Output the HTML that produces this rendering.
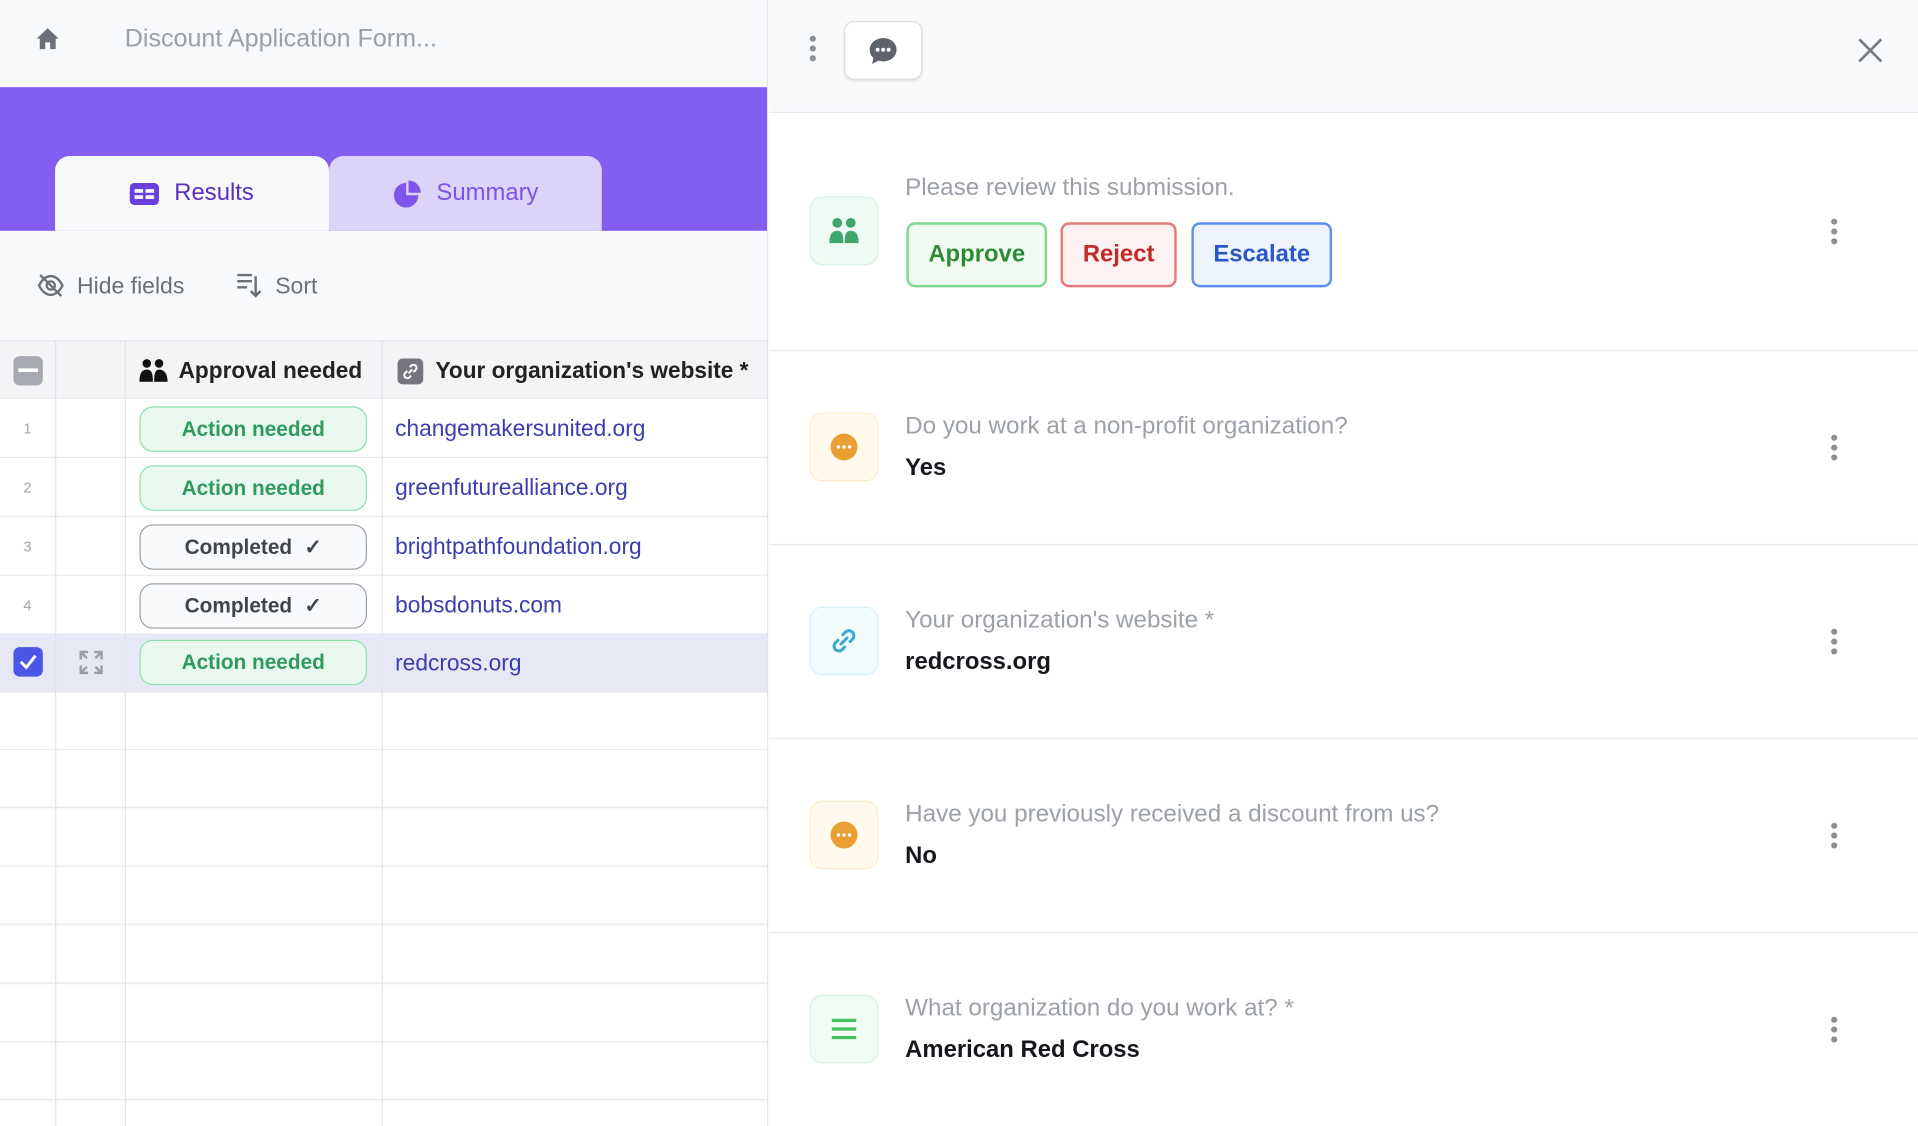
<!DOCTYPE html>
<html><head><meta charset="utf-8">
<style>
*{box-sizing:border-box;margin:0;padding:0}
html,body{width:1918px;height:1126px;overflow:hidden;background:#fff;font-family:"Liberation Sans",Arial,sans-serif}
#w{position:absolute;left:0;top:0;width:1568px;height:917px;transform:scale(1.2232,1.2279);transform-origin:0 0}
.a{position:absolute}
.left{left:0;top:0;width:628px;height:917px;background:#f8f9fb;border-right:1px solid #e4e5e9;overflow:hidden}
.title{left:102px;top:20px;font-size:20.5px;color:#9b9fa7}
.band{left:0;top:71px;width:628px;height:117px;background:#845ef0}
.tab{top:127px;height:61px;border-radius:12px 12px 0 0;font-size:19.5px;display:flex;align-items:center;justify-content:center;gap:12px}
.row{position:absolute;left:0;width:628px;height:48px;border-bottom:1px solid #e8e9ec;background:#fff}
.e{height:47px}
.vl{position:absolute;top:277px;bottom:0;width:1px;background:#e4e5e8}
.num{position:absolute;left:0;width:45px;text-align:center;font-size:12px;color:#a2a5ad;top:17px}
.pill{position:absolute;left:114px;top:6px;width:186px;height:37px;border-radius:11px;font-size:17px;font-weight:bold;display:flex;align-items:center;justify-content:center;gap:10px}
.act{background:#e9f9ef;border:1.5px solid #8ee0ad;color:#309a5d}
.cmp{background:#f9fafb;border:1.5px solid #9ea2aa;color:#42444c}
.lnk{position:absolute;left:323px;top:13px;font-size:18.6px;color:#3a3eae}
.right{left:629px;top:0;width:939px;height:917px;background:#fff}
.sec{position:absolute;left:0;width:939px;border-bottom:1.5px solid #ebebef}
.ib{position:absolute;left:33px;width:56px;height:56px;border-radius:10px;display:flex;align-items:center;justify-content:center}
.lbl{position:absolute;left:111px;font-size:19.8px;color:#9ca0a8}
.val{position:absolute;left:111px;font-size:19.5px;font-weight:bold;color:#15171c}
.keb{position:absolute;left:868px;width:6px}
.keb i{display:block;width:5px;height:5px;border-radius:50%;background:#8b8f97;margin-bottom:3px}
.btn{position:absolute;top:181px;height:53px;border-radius:7px;font-size:19.5px;font-weight:bold;display:flex;align-items:center;justify-content:center}
</style></head><body><div id="w">
<div class="a left">
  <svg class="a" style="left:29px;top:22px" width="20" height="19" viewBox="0 0 20 19"><path d="M10 1 L19 9.5 H16.5 V18 H12 V12.5 H8 V18 H3.5 V9.5 H1 Z" fill="#6b6f78"/></svg>
  <div class="a title">Discount Application Form...</div>
  <div class="a band"></div>
  <div class="a tab" style="left:45px;width:224px;background:#f8f9fb;color:#5a2fc2">
    <svg width="24" height="18" viewBox="0 0 24 18"><rect x="0" y="0" width="24" height="18" rx="4" fill="#6a3fe0"/><rect x="4" y="5" width="7" height="3" fill="#f8f9fb"/><rect x="13" y="5" width="7" height="3" fill="#f8f9fb"/><rect x="4" y="10" width="7" height="3" fill="#f8f9fb"/><rect x="13" y="10" width="7" height="3" fill="#f8f9fb"/></svg>Results</div>
  <div class="a tab" style="left:269px;width:223px;background:#dcd4f8;color:#7d52e6">
    <svg width="24" height="24" viewBox="0 0 24 24"><path d="M11 3 A10 10 0 1 0 21 13 H11 Z" fill="#8055ea"/><path d="M13 1 A10 10 0 0 1 23 11 H13 Z" fill="#8055ea"/></svg>Summary</div>
  <svg class="a" style="left:30px;top:221px" width="23" height="23" viewBox="0 0 24 24" fill="none" stroke="#6b6f78" stroke-width="2"><path d="M2 12 C5 6 9 4 12 4 C15 4 19 6 22 12 C19 18 15 20 12 20 C9 20 5 18 2 12Z"/><circle cx="12" cy="12" r="3.5"/><path d="M3 3 L21 21"/></svg>
  <div class="a" style="left:63px;top:222px;font-size:18.8px;color:#6b6f78">Hide fields</div>
  <svg class="a" style="left:193px;top:221px" width="22" height="22" viewBox="0 0 22 22" fill="none" stroke="#6b6f78" stroke-width="2"><path d="M1 3H13M1 8H13M1 13H9M16 4V20M12 16L16 20L20 16"/></svg>
  <div class="a" style="left:225px;top:222px;font-size:18.8px;color:#6b6f78">Sort</div>

  <div class="row" style="top:277px;height:48px;background:#f4f4f6;border-top:1.5px solid #e6e7ea">
    <div class="a" style="left:11px;top:12px;width:24px;height:24px;border-radius:5px;background:#a7a9b1"><div class="a" style="left:4px;top:10px;width:16px;height:3px;background:#fff"></div></div>
    <svg class="a" style="left:114px;top:14px" width="23" height="19" viewBox="0 0 23 19" fill="#111"><circle cx="6" cy="4" r="3.5"/><circle cx="16" cy="4" r="3.5"/><path d="M0 19 C0 12 2 9 6 9 C10 9 11 12 11 19Z"/><path d="M12 19 C12 12 13 9 16 9 C20 9 23 12 23 19Z"/></svg>
    <div class="a" style="left:146px;top:13px;font-size:18.5px;font-weight:bold;color:#222">Approval needed</div>
    <div class="a" style="left:325px;top:14px;width:21px;height:21px;border-radius:4px;background:#75767d"></div>
    <svg class="a" style="left:325px;top:14px" width="21" height="21" viewBox="0 0 21 21" fill="none" stroke="#fff" stroke-width="1.6"><path d="M9 12 L12 9"/><path d="M8 10 L6 12 A2.5 2.5 0 0 0 9.5 15.5 L11 14"/><path d="M10 7 L11.5 5.5 A2.5 2.5 0 0 1 15 9 L13 11"/></svg>
    <div class="a" style="left:356px;top:13px;font-size:18.5px;font-weight:bold;color:#222">Your organization's website *</div>
  </div>
  <div class="row" style="top:325px"><div class="num">1</div><div class="pill act">Action needed</div><div class="lnk">changemakersunited.org</div></div>
  <div class="row" style="top:373px"><div class="num">2</div><div class="pill act">Action needed</div><div class="lnk">greenfuturealliance.org</div></div>
  <div class="row" style="top:421px"><div class="num">3</div><div class="pill cmp">Completed <span>✓</span></div><div class="lnk">brightpathfoundation.org</div></div>
  <div class="row" style="top:469px"><div class="num">4</div><div class="pill cmp">Completed <span>✓</span></div><div class="lnk">bobsdonuts.com</div></div>
  <div class="row" style="top:516px;background:#e6e9f5">
    <div class="a" style="left:11px;top:11px;width:24px;height:24px;border-radius:5px;background:#4b55e8"></div>
    <svg class="a" style="left:11px;top:11px" width="24" height="24" viewBox="0 0 24 24" fill="none" stroke="#fff" stroke-width="2.4"><path d="M6 12 L10.5 16.5 L18 7"/></svg>
    <svg class="a" style="left:64px;top:13px" width="21" height="21" viewBox="0 0 21 21" fill="none" stroke="#9a9da5" stroke-width="2"><path d="M2 8V2H8M2 2L7 7M19 8V2H13M19 2L14 7M2 13V19H8M2 19L7 14M19 13V19H13M19 19L14 14"/></svg>
    <div class="pill act" style="top:5px">Action needed</div><div class="lnk">redcross.org</div></div>
  <div class="row e" style="top:564px"></div><div class="row e" style="top:611px"></div><div class="row e" style="top:659px"></div><div class="row e" style="top:706px"></div><div class="row e" style="top:754px"></div><div class="row e" style="top:802px"></div><div class="row e" style="top:849px"></div><div class="row e" style="top:897px"></div>
  <div class="vl" style="left:45px"></div><div class="vl" style="left:102px"></div><div class="vl" style="left:312px"></div>
</div>

<div class="a right">
  <div class="sec" style="top:0;height:92px;background:#f8f9fb">
    <div class="keb" style="left:33px;top:29px"><i></i><i></i><i></i></div>
    <div class="a" style="left:61px;top:17px;width:64px;height:48px;background:#fff;border:1.5px solid #dcdde1;border-radius:8px;box-shadow:0 1px 2px rgba(0,0,0,.08)"></div>
    <svg class="a" style="left:81px;top:30px" width="24" height="23" viewBox="0 0 24 23"><path d="M12 1 C18 1 23 5 23 10.5 C23 16 18 20 12 20 C10 20 9 19.5 8 19.5 L3 22 L4 17 C2 15.5 1 13 1 10.5 C1 5 6 1 12 1Z" fill="#5e626b"/><circle cx="7.5" cy="10.5" r="1.6" fill="#fff"/><circle cx="12" cy="10.5" r="1.6" fill="#fff"/><circle cx="16.5" cy="10.5" r="1.6" fill="#fff"/></svg>
    <svg class="a" style="left:889px;top:30px" width="22" height="22" viewBox="0 0 22 22" stroke="#777b83" stroke-width="2.2"><path d="M2 2L20 20M20 2L2 20"/></svg>
  </div>
  <div class="sec" style="top:92px;height:194px">
    <div class="ib" style="top:68px;background:#eefaf3;border:1.5px solid #d7f2e2"><svg width="24" height="22" viewBox="0 0 24 22" fill="#3fa66e"><circle cx="6.5" cy="4.5" r="4"/><circle cx="17.5" cy="4.5" r="4"/><path d="M0 21 C0 13 3 11 6.5 11 C10 11 11.5 13 11.5 21Z"/><path d="M12.5 21 C12.5 13 14 11 17.5 11 C21 11 24 13 24 21Z"/></svg></div>
    <div class="lbl" style="top:50px">Please review this submission.</div>
    <div class="keb" style="top:86px"><i></i><i></i><i></i></div>
  </div>
  <div class="btn" style="left:112px;width:115px;background:#effbf1;border:2px solid #7fd88f;color:#2e8a35">Approve</div>
  <div class="btn" style="left:238px;width:95px;background:#fdf1f1;border:2px solid #e07c7c;color:#c2292b">Reject</div>
  <div class="btn" style="left:345px;width:115px;background:#eef4fe;border:2px solid #5f8ff0;color:#2b56c8">Escalate</div>
  <div class="sec" style="top:286px;height:158px">
    <div class="ib" style="top:50px;background:#fffaeb;border:1.5px solid #fbeec8"><svg width="24" height="24" viewBox="0 0 24 24"><circle cx="12" cy="12" r="11" fill="#ea9f35"/><circle cx="7.5" cy="12" r="1.4" fill="#fff"/><circle cx="12" cy="12" r="1.4" fill="#fff"/><circle cx="16.5" cy="12" r="1.4" fill="#fff"/></svg></div>
    <div class="lbl" style="top:50px">Do you work at a non-profit organization?</div>
    <div class="val" style="top:84px">Yes</div>
    <div class="keb" style="top:68px"><i></i><i></i><i></i></div>
  </div>
  <div class="sec" style="top:444px;height:158px">
    <div class="ib" style="top:50px;background:#effbfd;border:1.5px solid #d5f2f8"><svg width="24" height="24" viewBox="0 0 24 24" fill="none" stroke="#3aa8cf" stroke-width="2.4" stroke-linecap="round"><path d="M9.5 14.5 L14.5 9.5"/><path d="M11 7 L13 5 A3.5 3.5 0 0 1 19 10.5 L17 12.5"/><path d="M7 11.5 L5 13.5 A3.5 3.5 0 0 0 10.5 19 L12.5 17"/></svg></div>
    <div class="lbl" style="top:50px">Your organization's website *</div>
    <div class="val" style="top:84px">redcross.org</div>
    <div class="keb" style="top:68px"><i></i><i></i><i></i></div>
  </div>
  <div class="sec" style="top:602px;height:158px">
    <div class="ib" style="top:50px;background:#fffaeb;border:1.5px solid #fbeec8"><svg width="24" height="24" viewBox="0 0 24 24"><circle cx="12" cy="12" r="11" fill="#ea9f35"/><circle cx="7.5" cy="12" r="1.4" fill="#fff"/><circle cx="12" cy="12" r="1.4" fill="#fff"/><circle cx="16.5" cy="12" r="1.4" fill="#fff"/></svg></div>
    <div class="lbl" style="top:50px">Have you previously received a discount from us?</div>
    <div class="val" style="top:84px">No</div>
    <div class="keb" style="top:68px"><i></i><i></i><i></i></div>
  </div>
  <div class="sec" style="top:760px;height:157px;border-bottom:none">
    <div class="ib" style="top:50px;background:#f0fbf3;border:1.5px solid #d8f3df"><svg width="24" height="20" viewBox="0 0 24 20" stroke="#45c060" stroke-width="2.6"><path d="M2 3H22M2 10H22M2 17H22"/></svg></div>
    <div class="lbl" style="top:50px">What organization do you work at? *</div>
    <div class="val" style="top:84px">American Red Cross</div>
    <div class="keb" style="top:68px"><i></i><i></i><i></i></div>
  </div>
</div>
</div></body></html>
